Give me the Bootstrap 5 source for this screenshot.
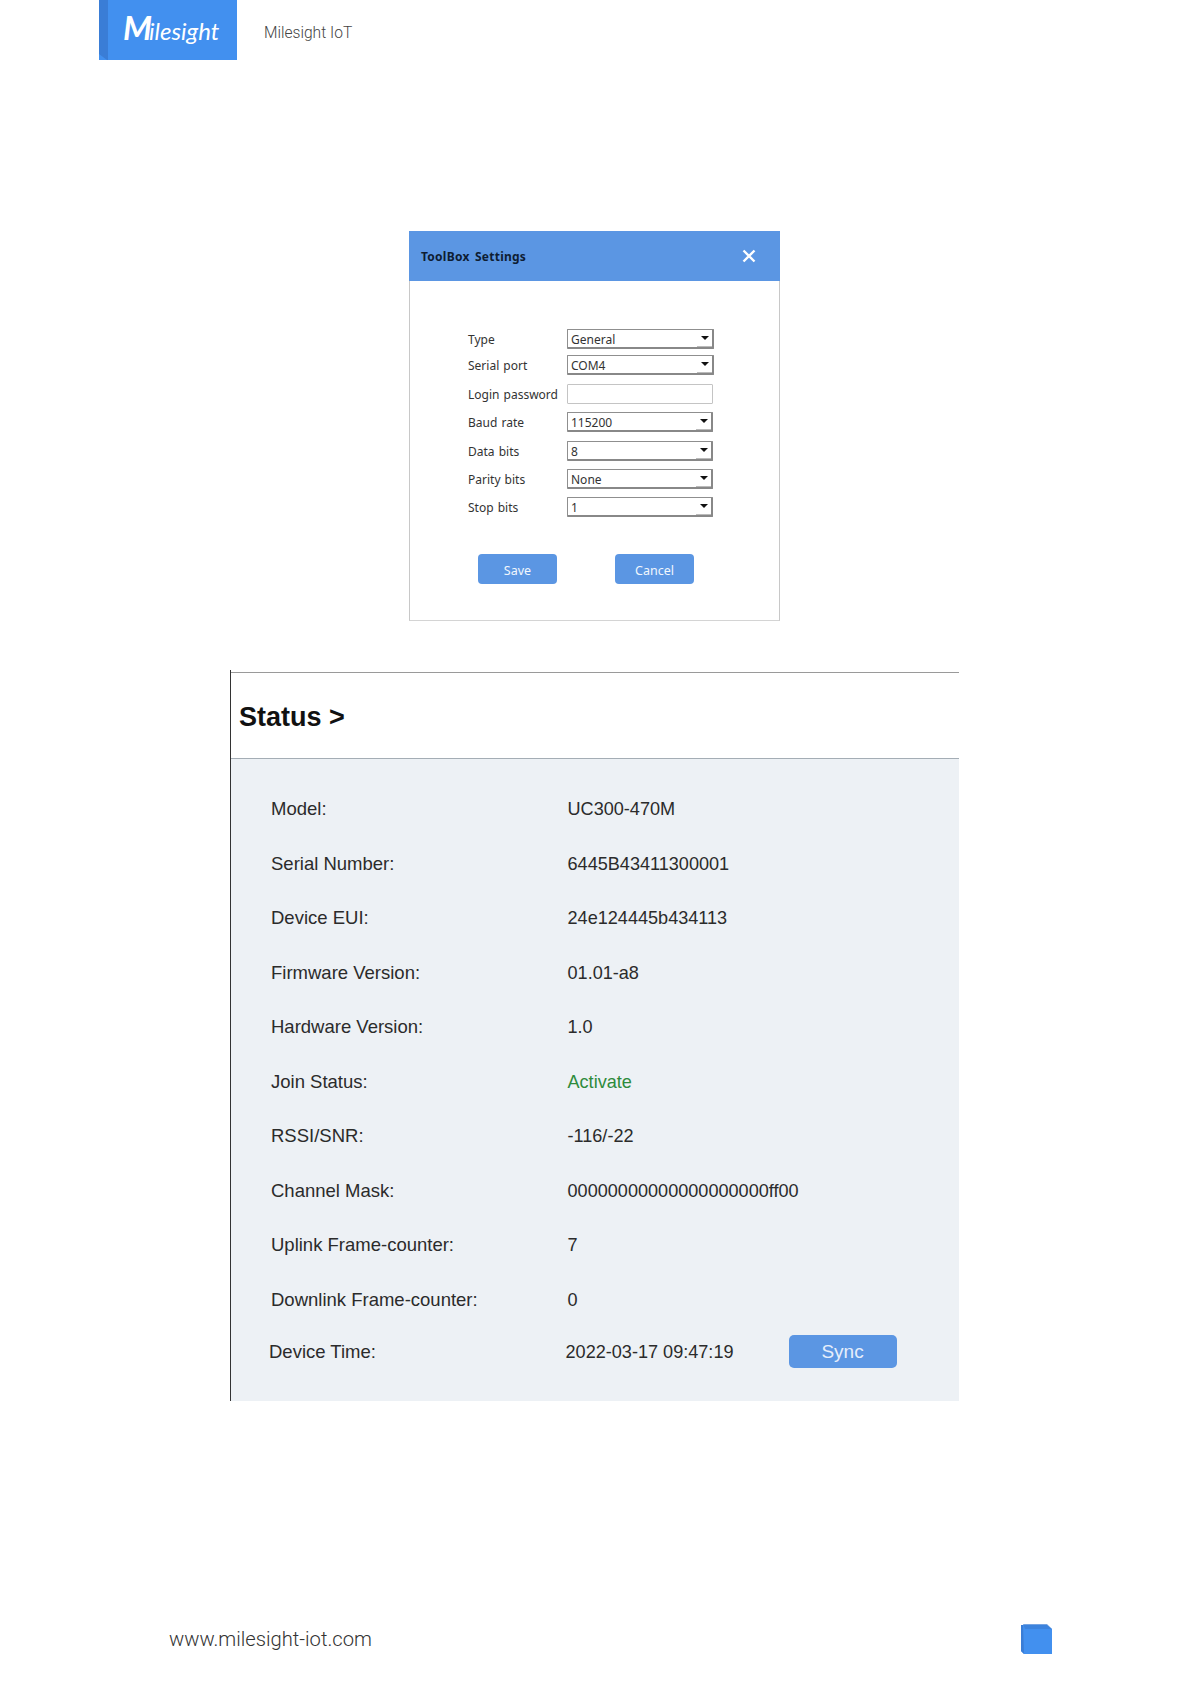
<!DOCTYPE html>
<html lang="en">
<head>
<meta charset="utf-8">
<title>Milesight IoT</title>
<link href="https://cdn.jsdelivr.net/npm/bootstrap@5.3.0/dist/css/bootstrap.min.css" rel="stylesheet">
<style>
html,body{background:#fff;margin:0}
.sheet{width:1191px;height:1684px;display:flex;flex-direction:column;overflow:hidden;font-family:"Liberation Sans",Arial,sans-serif}
.top-bar{padding-left:99px;height:60px;margin-bottom:171px}
.logo-box{width:138px;height:60px;background:#4290ef;position:relative;color:#fff;font-family:Lato,sans-serif;font-style:italic;font-weight:400;font-size:24px;padding:12px 0 0 24px;letter-spacing:0;line-height:36px;white-space:nowrap}
.logo-box svg{position:absolute;left:0;top:0}
.logo-box b{font-weight:700;font-size:33px;line-height:30px;letter-spacing:-3px}
.brand-name{font-family:Roboto,sans-serif;font-weight:300;font-size:15.6px;color:#444;margin-left:27px;margin-top:7px}
.tool-dlg{width:371px;height:390px;margin-left:409px;border:0;border-left:1px solid #c8c8c8;border-right:1px solid #c8c8c8;border-bottom:1px solid #d4d4d4;border-radius:0;font-family:"Noto Sans","DejaVu Sans",sans-serif;background:#fff}
.dlg-head{height:50px;background:#5b96e3;margin:0 -1px;padding:0 24px 0 12px;color:#0e1d33;font-size:12px;font-weight:700;letter-spacing:.25px;word-spacing:2px}
.dlg-head span{padding-top:2px}
.dlg-form{padding:48px 0 0 58px;color:#333;font-size:12px}
.frow{height:20px;margin-bottom:8px}
.frow.tight{margin-bottom:6px}
.frow.wide{margin-bottom:9px}
.flab{width:99px;line-height:20px;padding-top:1px;white-space:nowrap;word-spacing:1px}
.fbox{width:146px;height:20px;border:1px solid #8f8f8f;background:#fff;padding-left:3px;line-height:19px;position:relative;border-radius:1px}
.fbox.pw{border-color:#c4c4c4}
.fbox.sel{border-right:2px solid #888;border-bottom:2px solid #888}
.frow.tight .fbox,.frow.wide:nth-child(2) .fbox{width:147px}
.fbox.sel::after{content:"";position:absolute;right:3px;top:6px;border-left:4px solid transparent;border-right:4px solid transparent;border-top:4px solid #111}
.fbox.sel::before{content:"";position:absolute;right:0;bottom:0;width:15px;height:1px;background:#bbb}
.dlg-actions{padding:29px 0 0 68px;gap:58px}
.dlg-btn{width:79px;height:30px;padding:0;background:#5b96e3;border:0;border-radius:4px;color:#f1f6fd;font-size:12.5px;line-height:33px}
.status-panel{width:729px;height:731px;margin:49px 0 0 230px;padding-top:2px;border-left:1px solid #333;display:flex;flex-direction:column}
.status-title{height:87px;border-top:1px solid #9a9a9a;border-bottom:1px solid #a4adb5;padding:3px 0 0 8px;font-size:27px;font-weight:700;color:#111;background:#fff;line-height:1}
.status-body{background:#edf1f5;flex:1;padding:23px 0 0 40px;font-size:18.5px;color:#2b2b2b}
.srow{height:54.5px;line-height:54.5px}
.slab{width:296.5px}
.sval{font-size:18.1px}
.sval-ok{color:#2e8b3c}
.srow.last{margin-left:-2px;margin-top:-2px}
.sync-btn{width:108px;height:33px;margin-left:55px;margin-top:-1px;padding:0;background:#5b96e3;border:0;border-radius:5px;color:#e6eefb;font-size:19px;line-height:33px}
.page-foot{margin-top:auto;padding:0 139px 30px 169px}
.foot-url{font-family:Roboto,sans-serif;font-weight:300;font-size:20.2px;color:#333;line-height:24px}
</style>
</head>
<body>
<div class="sheet">
  <div class="top-bar d-flex align-items-center">
    <div class="logo-box"><svg width="10" height="60" viewBox="0 0 10 60"><path d="M0 0H9V60H8L0 54Z" fill="#3a7dd6"/></svg><b>M</b>ilesight</div>
    <div class="brand-name">Milesight IoT</div>
  </div>

  <div class="card tool-dlg">
    <div class="dlg-head d-flex align-items-center justify-content-between">
      <span>ToolBox Settings</span>
      <svg width="14" height="14" viewBox="0 0 14 14"><path d="M1.5 1.5 12.5 12.5M12.5 1.5 1.5 12.5" stroke="#fff" stroke-width="2.4"/></svg>
    </div>
    <div class="dlg-form">
      <div class="frow tight d-flex"><div class="flab">Type</div><div class="fbox sel">General</div></div>
      <div class="frow wide d-flex"><div class="flab">Serial port</div><div class="fbox sel">COM4</div></div>
      <div class="frow d-flex"><div class="flab">Login password</div><div class="fbox pw"></div></div>
      <div class="frow wide d-flex"><div class="flab">Baud rate</div><div class="fbox sel">115200</div></div>
      <div class="frow d-flex"><div class="flab">Data bits</div><div class="fbox sel">8</div></div>
      <div class="frow d-flex"><div class="flab">Parity bits</div><div class="fbox sel">None</div></div>
      <div class="frow d-flex"><div class="flab">Stop bits</div><div class="fbox sel">1</div></div>
    </div>
    <div class="dlg-actions d-flex">
      <button type="button" class="btn dlg-btn">Save</button>
      <button type="button" class="btn dlg-btn">Cancel</button>
    </div>
  </div>

  <div class="status-panel">
    <div class="status-title d-flex align-items-center">Status &gt;</div>
    <div class="status-body">
      <div class="srow d-flex"><div class="slab">Model:</div><div class="sval">UC300-470M</div></div>
      <div class="srow d-flex"><div class="slab">Serial Number:</div><div class="sval">6445B43411300001</div></div>
      <div class="srow d-flex"><div class="slab">Device EUI:</div><div class="sval">24e124445b434113</div></div>
      <div class="srow d-flex"><div class="slab">Firmware Version:</div><div class="sval">01.01-a8</div></div>
      <div class="srow d-flex"><div class="slab">Hardware Version:</div><div class="sval">1.0</div></div>
      <div class="srow d-flex"><div class="slab">Join Status:</div><div class="sval sval-ok">Activate</div></div>
      <div class="srow d-flex"><div class="slab">RSSI/SNR:</div><div class="sval">-116/-22</div></div>
      <div class="srow d-flex"><div class="slab">Channel Mask:</div><div class="sval">00000000000000000000ff00</div></div>
      <div class="srow d-flex"><div class="slab">Uplink Frame-counter:</div><div class="sval">7</div></div>
      <div class="srow d-flex"><div class="slab">Downlink Frame-counter:</div><div class="sval">0</div></div>
      <div class="srow last d-flex align-items-center"><div class="slab">Device Time:</div><div class="sval">2022-03-17 09:47:19</div><button type="button" class="btn sync-btn">Sync</button></div>
    </div>
  </div>

  <div class="page-foot d-flex align-items-center justify-content-between">
    <div class="foot-url">www.milesight-iot.com</div>
    <svg width="31" height="30" viewBox="0 0 31 30"><path d="M0 1H26L31 5V30H3L0 27Z" fill="#4290ef"/><path d="M0 1H2L3 30 0 27Z" fill="#3a7dd6"/><path d="M2 0H26L31 5H4Z" fill="#3a7dd6" opacity=".7"/></svg>
  </div>
</div>
</body>
</html>
